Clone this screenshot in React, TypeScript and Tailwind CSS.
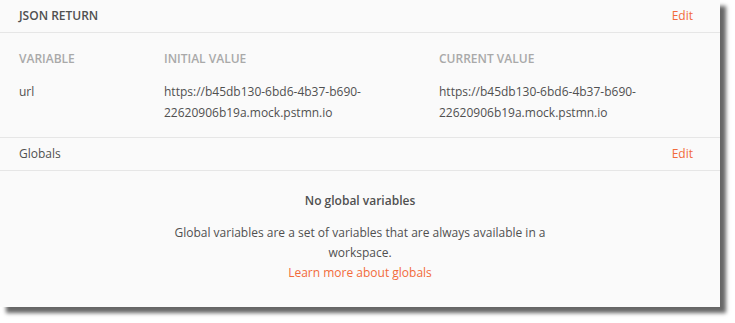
const COLS = "grid grid-cols-[145px_275px_1fr]";

const VALUE = "https://b45db130-6bd6-4b37-b690-22620906b19a.mock.pstmn.io";

const SectionHeader = ({ title }: { title: string }) => (
  <div className="flex h-[33px] items-center justify-between border-b border-[#e6e6e6] pl-[19px] pr-[27px]">
    <span className="text-[12px] text-[#505050]">{title}</span>
    <a className="cursor-pointer text-[12px] text-[#f26b3a]">Edit</a>
  </div>
);

export default function App() {
  return (
    <div className="h-[323px] w-[735px] bg-white font-['Open_Sans',sans-serif]">
      <div className="h-[307px] w-[720px] bg-[#fafafa] shadow-[6px_6px_4px_rgba(0,0,0,0.6)]">
        <div className="flex h-[33px] items-center justify-between border-b border-[#e6e6e6] pl-[19px] pr-[27px]">
          <span className="text-[12px] font-semibold text-[#505050]">JSON RETURN</span>
          <a className="cursor-pointer text-[12px] text-[#f26b3a]">Edit</a>
        </div>

        {/* variables table */}
        <div className="border-b border-[#e6e6e6] pb-[14px] pl-[19px] pt-[17px]">
          <div className={`${COLS} text-[12px] font-semibold text-[#a9a9a9]`}>
            <span>VARIABLE</span>
            <span>INITIAL VALUE</span>
            <span>CURRENT VALUE</span>
          </div>
          <div className={`${COLS} mt-[13px] text-[12px] leading-[21px] text-[#505050]`}>
            <span>url</span>
            <span className="pr-[70px]">{VALUE}</span>
            <span className="pr-[70px]">{VALUE}</span>
          </div>
        </div>

        <SectionHeader title="Globals" />

        <div className="flex flex-col items-center pt-[21px] text-[12px] text-[#505050]">
          <p className="font-semibold">No global variables</p>
          <p className="mt-[13px] max-w-[400px] text-center leading-[20px]">
            Global variables are a set of variables that are always available in a workspace.
          </p>
          <a className="cursor-pointer leading-[19px] text-[#f26b3a]">Learn more about globals</a>
        </div>
      </div>
    </div>
  );
}
